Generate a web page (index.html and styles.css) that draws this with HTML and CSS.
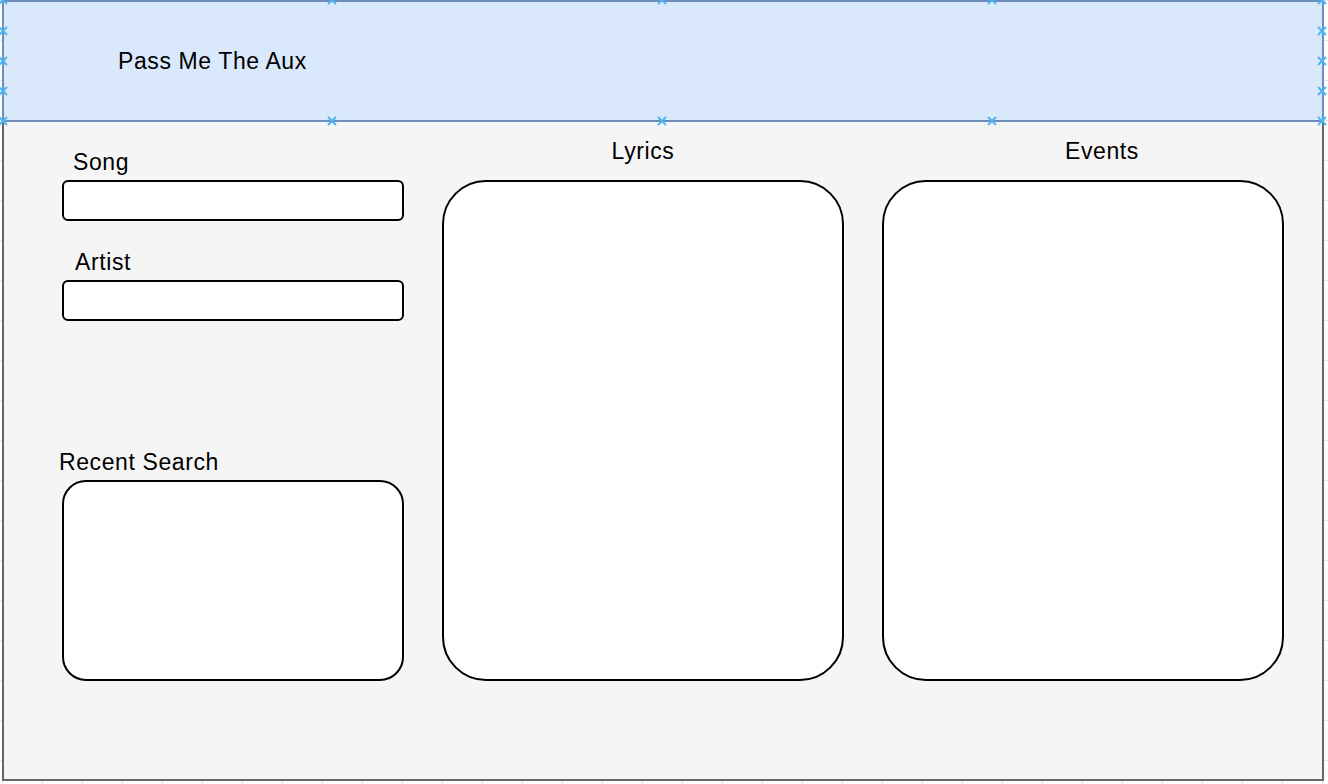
FILE: index.html
```html
<!DOCTYPE html>
<html lang="en">
<head>
<meta charset="utf-8">
<title>Pass Me The Aux</title>
<link rel="stylesheet" href="styles.css">
</head>
<body>
<div class="frame">
  <header class="header">
    <h1 class="title">Pass Me The Aux</h1>
  </header>
  <main class="content">
    <section class="col col-left">
      <label class="label label-song">Song</label>
      <div class="input"></div>
      <label class="label label-artist">Artist</label>
      <div class="input"></div>
      <label class="label label-recent">Recent Search</label>
      <div class="box box-recent"></div>
    </section>
    <section class="col col-mid">
      <h2 class="heading">Lyrics</h2>
      <div class="box box-tall"></div>
    </section>
    <section class="col col-right">
      <h2 class="heading heading-events">Events</h2>
      <div class="box box-tall"></div>
    </section>
  </main>
</div>
<svg class="handles" width="1328" height="130" viewBox="0 0 1328 130" aria-hidden="true">
  <g stroke="#4db5ef" stroke-width="2" fill="none">
    <path d="M-1 -4 L7 4 M7 -4 L-1 4"/>
    <path d="M-1 27 L7 35 M7 27 L-1 35"/>
    <path d="M-1 57 L7 65 M7 57 L-1 65"/>
    <path d="M-1 87 L7 95 M7 87 L-1 95"/>
    <path d="M-1 117 L7 125 M7 117 L-1 125"/>
    <path d="M328 -4 L336 4 M336 -4 L328 4"/>
    <path d="M658 -4 L666 4 M666 -4 L658 4"/>
    <path d="M988 -4 L996 4 M996 -4 L988 4"/>
    <path d="M328 117 L336 125 M336 117 L328 125"/>
    <path d="M658 117 L666 125 M666 117 L658 125"/>
    <path d="M988 117 L996 125 M996 117 L988 125"/>
    <path d="M1318 -4 L1326 4 M1326 -4 L1318 4"/>
    <path d="M1318 27 L1326 35 M1326 27 L1318 35"/>
    <path d="M1318 57 L1326 65 M1326 57 L1318 65"/>
    <path d="M1318 87 L1326 95 M1326 87 L1318 95"/>
    <path d="M1318 117 L1326 125 M1326 117 L1318 125"/>
  </g>
</svg>
</body>
</html>
```
FILE: styles.css
```css
* { box-sizing: border-box; }

html, body {
  margin: 0;
  padding: 0;
}

body {
  width: 1328px;
  height: 784px;
  overflow: hidden;
  position: relative;
  font-family: "Liberation Sans", Arial, Helvetica, sans-serif;
  color: #000;
  background-color: #ffffff;
  background-image:
    linear-gradient(to right, #e4e4e4 1px, transparent 1px),
    linear-gradient(to bottom, #e4e4e4 1px, transparent 1px);
  background-size: 40px 40px;
  background-position: 2px 0;
}

.frame {
  margin-left: 2px;
  width: 1322px;
  height: 781px;
  border: 2px solid #666666;
  border-top: none;
  background: #f5f5f5;
  display: flex;
  flex-direction: column;
}

.header {
  margin: 0 -2px;
  height: 122px;
  background: #dae8fc;
  border: 2px solid #6c8ebf;
  display: flex;
  align-items: center;
  padding-left: 114px;
  flex: none;
}

.title {
  margin: 0;
  font-size: 23px;
  letter-spacing: 0.6px;
  font-weight: normal;
  line-height: 26px;
}

.content {
  display: flex;
  gap: 38px;
  padding-left: 58px;
}

.col {
  display: flex;
  flex-direction: column;
}

.col-left {
  width: 342px;
  padding-top: 27px;
}

.col-mid,
.col-right {
  width: 402px;
  padding-top: 16px;
}

.label {
  display: block;
  font-size: 23px;
  letter-spacing: 0.6px;
  line-height: 26px;
  margin-bottom: 5px;
}

.label-song { padding-left: 11px; }
.label-artist { padding-left: 13px; margin-top: 28px; }
.label-recent { margin-left: -3px; margin-top: 128px; }

.input {
  height: 41px;
  background: #ffffff;
  border: 2px solid #000;
  border-radius: 6px;
}

.heading {
  margin: 0 0 16px;
  font-size: 23px;
  letter-spacing: 0.6px;
  font-weight: normal;
  line-height: 26px;
  text-align: center;
}

.heading-events {
  padding-left: 38px;
}

.box {
  background: #ffffff;
  border: 2px solid #000;
}

.box-recent {
  height: 201px;
  border-radius: 24px;
}

.box-tall {
  height: 501px;
  border-radius: 44px;
}

.handles {
  position: absolute;
  top: 0;
  left: 0;
  pointer-events: none;
}
```
